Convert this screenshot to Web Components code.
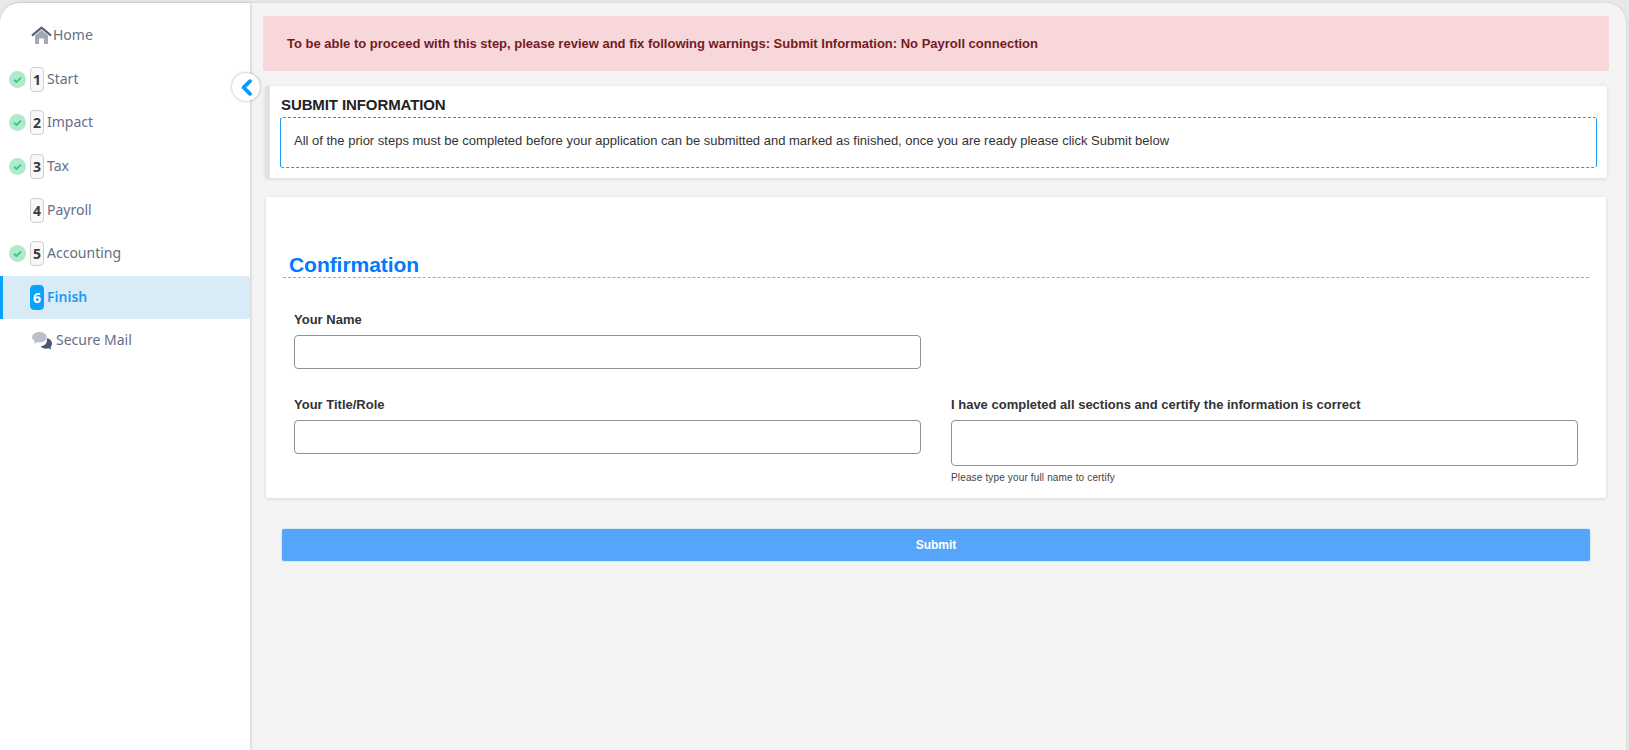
<!DOCTYPE html>
<html>
<head>
<meta charset="utf-8">
<title>Finish</title>
<style>
  html, body { margin: 0; height: 100%; }
  body { background: #e8e8e8; font-family: "Liberation Sans", Arial, sans-serif; overflow: hidden; }
</style>
</head>
<body>
<app-shell>
  <side-nav slot="nav">
    <nav-item icon="home" label="Home"></nav-item>
    <nav-item done step="1" label="Start"></nav-item>
    <nav-item done step="2" label="Impact"></nav-item>
    <nav-item done step="3" label="Tax"></nav-item>
    <nav-item step="4" label="Payroll"></nav-item>
    <nav-item done step="5" label="Accounting"></nav-item>
    <nav-item active step="6" label="Finish"></nav-item>
    <nav-item icon="mail" label="Secure Mail"></nav-item>
  </side-nav>
  <alert-banner>To be able to proceed with this step, please review and fix following warnings: Submit Information: No Payroll connection</alert-banner>
  <info-card heading="SUBMIT INFORMATION">All of the prior steps must be completed before your application can be submitted and marked as finished, once you are ready please click Submit below</info-card>
  <confirm-form></confirm-form>
  <submit-bar>Submit</submit-bar>
</app-shell>

<script>
class AppShell extends HTMLElement {
  constructor() {
    super();
    this.attachShadow({ mode: 'open' });
    this.shadowRoot.innerHTML = `
      <style>
        :host {
          display: flex;
          height: 747px;
          margin: 3px 3px 0 0;
          background: #f4f4f4;
          border-radius: 20px 20px 0 0;
          box-shadow: 0 0 3px rgba(0,0,0,0.12);
        }
        main {
          flex: 1;
          min-width: 0;
          padding: 13px 17px 0 13px;
        }
      </style>
      <slot name="nav"></slot>
      <main><slot></slot></main>
    `;
  }
}

class SideNav extends HTMLElement {
  constructor() {
    super();
    this.attachShadow({ mode: 'open' });
    this.shadowRoot.innerHTML = `
      <style>
        :host {
          display: block;
          position: relative;
          flex: 0 0 250px;
          box-sizing: border-box;
          padding-top: 11px;
          background: #fff;
          border-radius: 20px 0 0 0;
          box-shadow: 1px 0 3px rgba(0,0,0,0.16);
        }
        .toggle {
          position: absolute;
          left: 232px;
          top: 70px;
          width: 28px;
          height: 28px;
          box-sizing: border-box;
          border-radius: 50%;
          background: #fff;
          box-shadow: 0 0 3px rgba(0,0,0,0.35);
          display: flex;
          align-items: center;
          justify-content: center;
        }
      </style>
      <slot></slot>
      <div class="toggle">
        <svg width="13" height="17" viewBox="0 0 13 17"><path d="M10 2.2 L3.6 8.5 L10 14.8" fill="none" stroke="#0a9cf5" stroke-width="3.8" stroke-linecap="round" stroke-linejoin="round"/></svg>
      </div>
    `;
  }
}

const NAV_ICONS = {
  home: `<svg class="ico" width="21" height="19" viewBox="0 0 21 19" style="margin-right:1px">
      <path d="M4 9.5 L10.5 4 L17 9.5 V18 H13 V12.5 H8 V18 H4 Z" fill="#a3a8b8"/>
      <path d="M1 9.6 L10.5 1.6 L20 9.6" fill="none" stroke="#5b6379" stroke-width="2.2" stroke-linejoin="round"/>
    </svg>`,
  mail: `<svg class="ico" width="22" height="19" viewBox="0 0 22 19" style="margin-right:3px">
      <path d="M8.5 1 C12.9 1 15.6 3.3 15.6 6.2 C15.6 9.2 12.7 11.4 8.5 11.4 C7.6 11.4 6.8 11.3 6.2 11.1 L3.2 13 L3.8 9.9 C2.2 9 1 7.7 1 6.2 C1 3.3 4.2 1 8.5 1 Z" fill="#bcbfc9"/>
      <path d="M15.8 7.2 C19 7.6 21 9.8 21 12.4 C21 13.9 20.4 15 19.6 15.9 L20.4 18.6 L17.4 17.3 C16.6 17.6 15.7 17.7 14.8 17.7 C12.6 17.7 10.7 16.8 9.7 15.3 C13.6 14.9 16.8 12 15.8 7.2 Z" fill="#4c5672"/>
    </svg>`
};

class NavItem extends HTMLElement {
  constructor() {
    super();
    this.attachShadow({ mode: 'open' });
  }

  connectedCallback() {
    const step = this.getAttribute('step');
    const icon = this.getAttribute('icon');
    const done = this.hasAttribute('done') ? `
      <svg class="check" width="17" height="17" viewBox="0 0 17 17">
        <circle cx="8.5" cy="8.5" r="8.5" fill="#aeeacb"/>
        <path d="M5 8.8 L7.5 11 L12 6.6" fill="none" stroke="#3cc680" stroke-width="1.8"/>
      </svg>` : '';
    const lead = step ? `<span class="badge">${step}</span>` : NAV_ICONS[icon];
    this.shadowRoot.innerHTML = `
      <style>
        :host {
          display: flex;
          position: relative;
          align-items: center;
          box-sizing: border-box;
          height: 43.6px;
          padding-left: 30px;
          color: #666d86;
          font: 400 14px "Noto Sans", sans-serif;
        }
        :host([active]) {
          background: #daebf8;
          color: #1a9bf5;
          font-weight: 600;
          border-radius: 0 3px 3px 0;
          box-shadow: inset 3px 0 0 #0aa2fb;
        }
        .check { position: absolute; left: 9px; top: 13px; }
        .badge {
          box-sizing: border-box;
          width: 14px;
          height: 25px;
          margin-right: 3px;
          display: flex;
          align-items: center;
          justify-content: center;
          border: 1px solid #cfcfcf;
          border-radius: 4px;
          background: #f8f8f8;
          color: #3a3a3a;
          font-weight: 700;
        }
        :host([active]) .badge {
          background: #0aa2fb;
          border-color: #0aa2fb;
          color: #fff;
        }
        .ico { margin-left: 1px; }
        .label { margin-bottom: 2px; }
      </style>
      ${done}${lead}<span class="label">${this.getAttribute('label')}</span>
    `;
  }
}

class AlertBanner extends HTMLElement {
  constructor() {
    super();
    this.attachShadow({ mode: 'open' });
    this.shadowRoot.innerHTML = `
      <style>
        :host {
          display: flex;
          align-items: center;
          box-sizing: border-box;
          height: 55px;
          padding: 0 24px;
          background: #f8d7da;
          color: #721c24;
          border-radius: 2px;
          font-size: 13px;
          font-weight: 700;
        }
      </style>
      <slot></slot>
    `;
  }
}

class InfoCard extends HTMLElement {
  constructor() {
    super();
    this.attachShadow({ mode: 'open' });
  }

  connectedCallback() {
    this.shadowRoot.innerHTML = `
      <style>
        :host {
          display: block;
          box-sizing: border-box;
          height: 92px;
          margin: 15px 2px 0 2px;
          padding: 8px 10px 0 10px;
          background: #fff;
          border-left: 5px solid #dfe3e0;
          border-radius: 2px;
          box-shadow: 0 1px 4px rgba(0,0,0,0.12);
        }
        h2 {
          margin: 0 0 0 1px;
          height: 23px;
          font-size: 15px;
          line-height: 21px;
          letter-spacing: -0.1px;
          font-weight: 700;
          color: #222;
        }
        .note {
          box-sizing: border-box;
          height: 51px;
          padding: 16px 13px 0 13px;
          border: 1px dashed #1a9bf5;
          border-left-style: solid;
          border-right-style: solid;
          border-radius: 3px;
          font-size: 13px;
          line-height: 14px;
          color: #333;
        }
      </style>
      <h2>${this.getAttribute('heading')}</h2>
      <div class="note"><slot></slot></div>
    `;
  }
}

class FormField extends HTMLElement {
  constructor() {
    super();
    this.attachShadow({ mode: 'open' });
  }

  connectedCallback() {
    const hint = this.getAttribute('hint');
    const height = this.getAttribute('box') || '34';
    this.shadowRoot.innerHTML = `
      <style>
        :host { display: block; }
        label {
          display: block;
          height: 23px;
          font-size: 13px;
          line-height: 14px;
          font-weight: 700;
          color: #333;
          padding-top: 1px;
          box-sizing: border-box;
        }
        input {
          display: block;
          box-sizing: border-box;
          width: 100%;
          height: ${height}px;
          margin: 0;
          padding: 0 8px;
          background: #fff;
          border: 1px solid #919191;
          border-radius: 4px;
          outline: none;
        }
        small {
          display: block;
          margin-top: 6px;
          font-size: 10px;
          line-height: 11px;
          letter-spacing: 0.15px;
          color: #444;
        }
      </style>
      <label>${this.getAttribute('label')}</label>
      <input type="text">
      ${hint ? `<small>${hint}</small>` : ''}
    `;
  }
}

class ConfirmForm extends HTMLElement {
  constructor() {
    super();
    this.attachShadow({ mode: 'open' });
    this.shadowRoot.innerHTML = `
      <style>
        :host {
          display: block;
          box-sizing: border-box;
          height: 301px;
          margin: 19px 3px 0 3px;
          padding: 53px 17px 0 17px;
          background: #fff;
          border-radius: 2px;
          box-shadow: 0 1px 4px rgba(0,0,0,0.12);
        }
        h3 {
          margin: 0;
          height: 27px;
          padding-left: 6px;
          border-bottom: 1px dashed #a8a8a8;
          color: #007bff;
          font-size: 21px;
          line-height: 29px;
          letter-spacing: -0.05px;
          font-weight: 700;
        }
        .grid {
          display: grid;
          grid-template-columns: 627px 627px;
          column-gap: 30px;
          row-gap: 28px;
          margin-top: 34px;
          padding: 0 11px;
        }
      </style>
      <h3>Confirmation</h3>
      <div class="grid">
        <form-field label="Your Name"></form-field>
        <div></div>
        <form-field label="Your Title/Role"></form-field>
        <form-field box="46" hint="Please type your full name to certify" label="I have completed all sections and certify the information is correct"></form-field>
      </div>
    `;
  }
}

class SubmitBar extends HTMLElement {
  constructor() {
    super();
    this.attachShadow({ mode: 'open' });
    this.shadowRoot.innerHTML = `
      <style>
        :host {
          display: block;
          margin: 30px 18px 0 18px;
        }
        button {
          display: block;
          box-sizing: border-box;
          width: 100%;
          height: 34px;
          padding: 0;
          background: #55a5fd;
          border: 1px solid #dfe7f0;
          border-radius: 3px;
          color: #fff;
          font: 700 12px "Liberation Sans", Arial, sans-serif;
        }
      </style>
      <button type="button"><slot></slot></button>
    `;
  }
}

customElements.define('app-shell', AppShell);
customElements.define('side-nav', SideNav);
customElements.define('nav-item', NavItem);
customElements.define('alert-banner', AlertBanner);
customElements.define('info-card', InfoCard);
customElements.define('form-field', FormField);
customElements.define('confirm-form', ConfirmForm);
customElements.define('submit-bar', SubmitBar);
</script>
</body>
</html>
